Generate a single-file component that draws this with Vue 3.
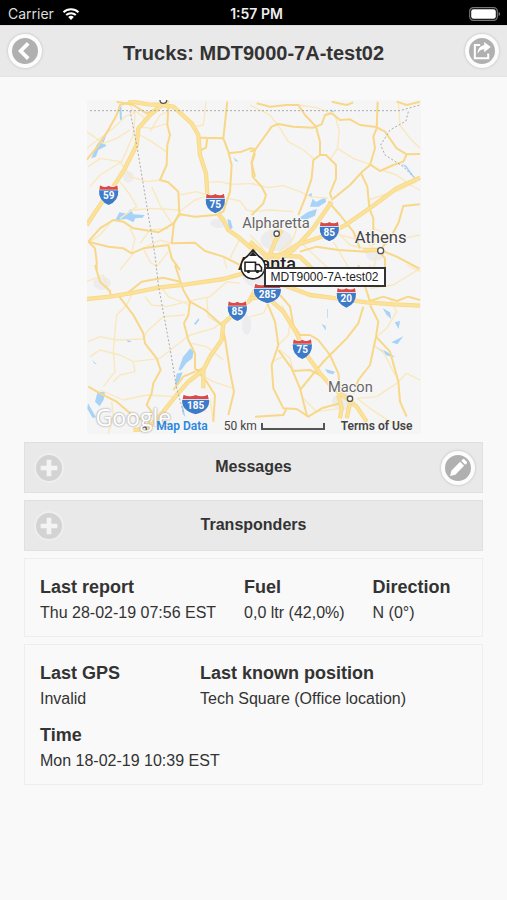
<script setup>
import { ref } from 'vue'

const sections = ref([
  { id: 'messages', title: 'Messages', editable: true, open: false },
  { id: 'transponders', title: 'Transponders', editable: false, open: false }
])

const cards = [
  {
    id: 'report',
    fields: [
      { label: 'Last report', value: 'Thu 28-02-19 07:56 EST' },
      { label: 'Fuel', value: '0,0 ltr (42,0%)' },
      { label: 'Direction', value: 'N (0°)' }
    ]
  },
  {
    id: 'gps',
    fields: [
      { label: 'Last GPS', value: 'Invalid' },
      { label: 'Last known position', value: 'Tech Square (Office location)' },
      { label: 'Time', value: 'Mon 18-02-19 10:39 EST' }
    ]
  }
]

const shields = [
  { n: '59', x: 86, y: 300 },
  { n: '75', x: 406, y: 325 },
  { n: '85', x: 748, y: 409 },
  { n: '85', x: 472, y: 648 },
  { n: '285', x: 562, y: 595, wide: true },
  { n: '20', x: 799, y: 608 },
  { n: '75', x: 667, y: 762 },
  { n: '185', x: 347, y: 928, wide: true }
]

// Road geometry, grouped by map tile; each tile spans 510 units.
const tiles = [
  {
    x: 0, y: 0,
    minor: [
      'M20 160L60 130L100 100L135 65L170 50L200 75L235 30',
      'M20 110L70 145L110 130L150 105',
      'M25 215L60 190L120 200L150 245L200 260L240 255',
      'M30 275L60 240L125 200L160 120L165 60L150 30',
      'M120 260L150 300L170 335L120 370',
      'M180 120L215 140L258 170',
      'M170 95L215 100L262 85L265 40',
      'M210 110L240 60L262 50',
      'M378 20L370 90L345 95',
      'M380 262L420 260L455 268L525 265',
      'M300 300L350 290L380 300',
      'M160 345L215 340L298 345',
      'M215 275L240 330L275 385',
      'M298 350L345 315L375 305',
      'M445 310L480 318L500 345L525 350',
      'M30 440L60 420L95 378',
      'M155 475L165 430L150 400',
      'M180 445L210 405L265 400',
      'M120 525L160 475',
      'M190 460L210 500L230 515L265 470',
      'M275 445L240 435L200 455',
      'M430 485L440 520M480 430L450 490'
    ],
    main: [
      'M20 195L60 145L85 105L110 60L120 30L150 22',
      'M265 35L262 90L270 120L262 150L260 210L240 255L265 262L295 290L298 355L282 385L275 445L345 443L375 468L430 485L480 510L525 512',
      'M300 358L345 365L405 360L430 350L450 290L455 210L445 170L430 130L442 20',
      'M360 128L430 130M382 130L378 158L358 168',
      'M445 175L485 170L510 160L525 162',
      'M525 175L515 205L525 245',
      'M25 440L60 400L100 375L130 380L160 400L235 412L280 385L300 358',
      'M25 440L85 455L130 460L155 475L190 460L265 450L275 490L300 525',
      'M25 440L45 460L50 500L50 525',
      'M110 20L160 30L200 55L230 40'
    ],
    highway: [
      'M20 390L60 330L100 275L135 220L170 150L175 100L210 60L245 30L280 35L335 85L355 120L360 180L378 235L382 295L405 345L430 375L445 405L480 430L525 470',
      'M145 18L205 28L245 30L265 16'
    ]
  },
  {
    x: 510, y: 0,
    minor: [
      'M0 30L60 60L90 100L115 140L160 165L195 195',
      'M0 265L55 278L100 272L150 290L180 305L235 310',
      'M145 30L200 38L255 60L268 110L262 160L240 195',
      'M262 160L310 190L360 208',
      'M0 350L60 345L130 350',
      'M445 20L450 90L480 130L510 160',
      'M355 315L400 300L450 285L500 260',
      'M395 225L440 240L480 270L510 285',
      'M370 400L420 420L460 430L510 420',
      'M20 380L60 400L70 450M150 370L130 430L80 480',
      'M250 400L300 450L340 460M270 420L350 440L380 470',
      'M380 480L370 525M150 440L240 525M250 440L300 525',
      'M0 420L30 450L60 490'
    ],
    main: [
      'M0 170L15 165L65 95L85 87L130 95L190 98L215 88L225 60L245 55L270 75L300 73L330 90L378 96L405 110L440 160L470 178L510 177',
      'M20 25L60 35L110 30L145 30L165 60L198 95L210 140L210 180L190 195L185 250L165 310L145 360',
      'M210 180L228 180L258 210L258 250L240 295L245 310',
      'M15 165L5 200L8 245L35 275L48 300L40 325L5 360',
      'M383 20L380 100L370 125L375 160L360 210L335 232L300 270L245 315',
      'M360 208L390 228L430 210L460 200L470 178',
      'M332 232L352 275L358 340L370 370L370 450',
      'M235 320L270 360L310 410L330 460',
      'M510 328L460 333L445 385L420 430L390 465',
      'M150 470L200 455L265 465L350 470L390 465L440 485L510 522',
      'M245 20L290 30L310 22M440 20L470 30L510 20',
      'M385 465L405 490L405 525'
    ],
    highway: [
      'M40 525L130 465L190 400L245 320',
      'M60 500L140 450L230 420L290 388L380 325L440 280L510 248',
      'M0 440L45 480L55 525M55 490L75 440L95 405',
      'M50 480L150 485L190 525M340 465L390 465'
    ]
  },
  {
    x: 0, y: 510,
    minor: [
      'M20 50L70 30L85 80M25 230L60 215L110 225L190 222',
      'M160 80L140 120L110 150L105 200L100 260L105 320L70 365',
      'M30 275L60 255L120 270L160 290L165 320L120 330L100 350',
      'M160 290L240 280L290 240L330 210L400 190L430 170',
      'M190 225L200 200L250 155L315 150',
      'M195 95L215 120L260 125L320 110L390 95L440 50L480 55',
      'M240 60L265 95L330 120',
      'M60 375L130 405L200 390L280 395L300 380',
      'M80 525L100 450L95 410',
      'M335 235L380 245L430 285',
      'M345 320L400 350L460 370',
      'M380 100L385 155L425 180',
      'M390 400L400 470M320 390L380 440'
    ],
    main: [
      'M45 0L60 50L90 78L92 98',
      'M118 95L160 150L190 205L195 235L230 280L242 315L220 355L215 385L200 420L215 440L200 500',
      'M135 90L185 50L250 38L300 50',
      'M285 0L300 45L310 75L330 110L325 150L312 175L325 225L345 265L345 310L380 350L405 390L400 470',
      'M330 110L375 135L425 180L435 220L450 320L462 380L445 450',
      'M25 365L60 385L110 410L145 440L185 465',
      'M345 320L310 335L280 375',
      'M380 300L360 315L345 315'
    ],
    highway: [
      'M20 102L90 95L150 85L235 68L320 58L430 42L480 28L525 10',
      'M525 75L510 105L470 140L430 175L425 225L390 275L370 315L325 350L290 390L250 440L200 495',
      'M370 315L370 370M160 495L215 490'
    ]
  },
  {
    x: 510, y: 510,
    minor: [
      'M0 155L40 145L55 115',
      'M85 240L115 210L120 170L95 120',
      'M130 320L120 280L90 255',
      'M320 400L360 430L420 470L480 490M320 400L380 395L440 355L470 325L510 345',
      'M375 220L410 190L440 140L420 100',
      'M65 290L100 275M370 240L400 260L435 330',
      'M360 70L430 60L510 10',
      'M270 430L200 440L160 400',
      'M340 60L360 0M470 0L510 20'
    ],
    main: [
      'M50 110L75 170L85 240L65 300L70 370L100 430L140 432L175 455L215 430L270 415',
      'M85 255L125 310L150 370L160 410L172 455',
      'M125 318L180 315L210 330',
      'M150 375L195 320L225 285L290 220L325 175L340 125',
      'M180 210L205 225L240 270L265 325L270 370',
      'M90 90L120 125L130 180L150 210L180 210',
      'M360 120L385 170L378 215L360 300L325 345L310 385',
      'M378 215L420 260L445 350L450 410L470 455',
      'M360 108L400 95L440 108L475 95L510 105',
      'M15 455L100 450L110 430M325 0L360 110'
    ],
    highway: [
      'M0 100L50 95L100 140L140 205L170 270L210 325L250 370L290 400L320 425L350 470',
      'M50 80L100 60L180 90L260 100L350 112L430 118L510 122',
      'M265 390L275 430L270 460M300 415L290 460'
    ]
  }
]
</script>

<template>
  <div class="app">
    <div class="status">
      <div class="carrier">
        <span>Carrier</span>
        <svg class="wifi" viewBox="0 0 18 14" aria-hidden="true">
          <path d="M1.5 5.2a10.8 10.8 0 0 1 15 0M4.2 8.1a7 7 0 0 1 9.6 0" fill="none" stroke="#fff" stroke-width="2" />
          <path d="M6.2 10.1a4 4 0 0 1 5.6 0L9 13z" fill="#fff" />
        </svg>
      </div>
      <div class="clock">1:57 PM</div>
      <svg class="battery" viewBox="0 0 32 14" aria-hidden="true">
        <rect x=".7" y=".7" width="27.6" height="12.6" rx="3.6" fill="none" stroke="#777" stroke-width="1.2" />
        <rect x="2.2" y="2.2" width="24.6" height="9.6" rx="2.2" fill="#fff" />
        <path d="M29.6 5v4q1.6-.6 1.6-2t-1.6-2z" fill="#777" />
      </svg>
    </div>

    <header class="header">
      <button class="round" type="button" aria-label="Back">
        <svg viewBox="0 0 28 28"><path d="M17.500 5.800L9.300 14l8.200 8.200" fill="none" stroke="#fff" stroke-width="4" /></svg>
      </button>
      <h1>Trucks: MDT9000-7A-test02</h1>
      <button class="round" type="button" aria-label="Share">
        <svg viewBox="0 0 28 28">
          <path d="M12 7.5H6.3v14.200h14.400v-5" fill="none" stroke="#fff" stroke-width="2.200" />
          <path d="M16.4 4.300l7 5.500-7 5.500v-3.300c-3.300 0-5.400 1.500-7.200 5 .3-5.600 3-8.800 7.200-9.100z" fill="#fff" />
        </svg>
      </button>
    </header>

    <main class="content">
      <div class="map">
        <svg class="roads" viewBox="21 15 1002 1002" role="img" aria-label="Map of the Atlanta area">
          <rect x="21" y="15" width="1002" height="1002" fill="#f5f5f5" />
          <g fill="#ececee">
            <ellipse cx="590" cy="435" rx="48" ry="32" />
            <ellipse cx="555" cy="535" rx="70" ry="48" />
            <ellipse cx="66" cy="565" rx="26" ry="20" />
            <ellipse cx="790" cy="920" rx="34" ry="26" />
            <ellipse cx="885" cy="478" rx="28" ry="20" />
            <ellipse cx="145" cy="245" rx="16" ry="18" />
            <ellipse cx="500" cy="690" rx="14" ry="30" />
            <ellipse cx="415" cy="385" rx="24" ry="14" />
          </g>
          <g fill="#a6d3f7">
            <path d="M34 190L50 150L84 106L70 145L80 152L55 165L48 185zM118 40l6-8 2 44-6-2z" />
            <path d="M106 376L118 352L140 356L152 342L160 358L194 360L188 368L166 370L160 382L140 372z" />
            <path d="M442 372l10 4 6 22-10 8zM460 186l16 14-10-2z" />
            <path d="M690 335l8-24 10 10 28-14 2 14-22 14zM655 370l30-20 26-8-6 20-28 12zM684 300l12-6-2 14z" />
            <path d="M965 206l14 6 26 36-10-6-16-22zM752 42l12 10-12-2z" />
            <path d="M285 868l5-32 18-4-14 36zM295 826l14-40 22-26 10 10-4 20-18 14-16 22zM304 930l6 8 6 28-8-10z" />
            <path d="M45 920l8-30 22 2-4 22-12 20zM24 925l24 42-10 2-16-28zM36 794l14 14-6-2zM138 732l18 8-12 2zM342 686l14-16 2 6-12 14z" />
            <path d="M725 687l12 6v14zM735 822l30 8-6 8-16-4zM742 642l2 0v26h-2z" />
            <path d="M908 640l22 12 4 20-14-12zM944 682l16-4-4 24zM934 742l36-18-18 24zM888 758l28 10 30 18-24-4z" />
          </g>
          <g v-for="(t, i) in tiles" :key="'a' + i" :transform="`translate(${t.x} ${t.y})`" fill="none" stroke-linejoin="round">
            <path v-for="d in t.minor" :key="d" :d="d" stroke="#fae8bd" stroke-width="4" />
            <path v-for="d in t.main" :key="d" :d="d" stroke="#f8d888" stroke-width="6" />
          </g>
          <g v-for="(t, i) in tiles" :key="'h' + i" :transform="`translate(${t.x} ${t.y})`" fill="none" stroke-linejoin="round">
            <path v-for="d in t.highway" :key="d" :d="d" stroke="#f8d985" stroke-width="13" />
            <path v-for="d in t.highway" :key="d + 'i'" :d="d" stroke="#fbe19a" stroke-width="8" />
          </g>
          <g fill="none" stroke="#aaa" stroke-width="3" stroke-dasharray="6 6">
            <path d="M30 47H960L1020 30M150 47L172 160L200 330L225 480L235 570L270 760L290 880L310 950" />
            <path d="M985 50L978 78L930 105L902 150L915 180L970 215L1005 250" />
          </g>
          <g v-for="(s, i) in shields" :key="'s' + i" :transform="`translate(${s.x} ${s.y})`">
            <g :transform="s.wide ? 'scale(1.4 1)' : undefined">
              <path d="M-28-32Q-14-22 0-30Q14-22 28-32Q34-8 27 6Q18 24 0 32Q-18 24-27 6Q-34-8-28-32z" fill="#fff" />
              <path d="M-26-29Q-13-20 0-28Q13-20 26-29L28-16H-28z" fill="#da4a49" />
              <path d="M-29-14H29Q31 18 0 30Q-31 18-29-14z" fill="#3d7bc9" />
            </g>
            <text class="shield" y="13">{{ s.n }}</text>
          </g>
          <g fill="#fff" stroke="#555" stroke-width="4">
            <path d="M240 15a10 10 0 1 0 20 0" />
            <circle cx="590" cy="416" r="8" />
            <circle cx="902" cy="467" r="9" />
            <circle cx="810" cy="911" r="8" />
            <circle cx="193" cy="1002" r="6" />
          </g>
          <g class="place">
            <text x="588" y="398">Alpharetta</text>
            <text class="strong" x="902" y="445">Athens</text>
            <text class="city" x="561" y="524">Atlanta</text>
            <text x="811" y="892">Macon</text>
          </g>
        </svg>
        <span class="google">Google</span>
        <div class="attribution">
          <a href="#map-data">Map Data</a>
          <span class="scale">50 km <i></i></span>
          <a class="terms" href="#terms">Terms of Use</a>
        </div>
        <svg class="marker" viewBox="0 0 32 34" aria-hidden="true">
          <path d="M16 2L22 8.500A12 12 0 1 1 10 8.500z" fill="#fff" stroke="#222" stroke-width="1.600" />
          <path d="M16 3.500l4 4.500h-8z" fill="#222" />
          <path d="M8 14.200h10.500v8.800H8zM18.500 16.500h3.500l2.500 3V23h-6z" fill="#fff" stroke="#222" stroke-width="1.600" />
          <circle cx="11.500" cy="23.600" r="1.700" fill="#222" />
          <circle cx="20.500" cy="23.600" r="1.700" fill="#222" />
        </svg>
        <span class="tip">MDT9000-7A-test02</span>
      </div>

      <section v-for="s in sections" :key="s.id" class="bar">
        <button class="toggle" type="button" :aria-expanded="s.open" @click="s.open = !s.open">
          <span class="plus">
            <svg viewBox="0 0 28 28"><path d="M14 5v18M5 14h18" stroke="#f4f4f4" stroke-width="5" /></svg>
          </span>
          <span class="name">{{ s.title }}</span>
        </button>
        <button v-if="s.editable" class="round edit" type="button" aria-label="Edit messages">
          <svg viewBox="0 0 28 28">
            <path d="M5.500 22.500l1.300-5.600L16.300 7.400l4.300 4.300-9.500 9.500zM17.500 6.200l1.700-1.700q.8-.7 1.600 0l2.700 2.700q.7.800 0 1.600l-1.700 1.700z" fill="#fff" />
          </svg>
        </button>
      </section>

      <section v-for="c in cards" :key="c.id" class="card">
        <dl :class="c.id">
          <div v-for="f in c.fields" :key="f.label" class="field">
            <dt>{{ f.label }}</dt>
            <dd>{{ f.value }}</dd>
          </div>
        </dl>
      </section>
    </main>
  </div>
</template>

<style>
body {
  background: #f9f9f9;
}
</style>

<style scoped>
.app {
  font-family: "Liberation Sans", Arial, sans-serif;
  font-size: 16px;
  color: #333;
}

.status {
  display: grid;
  grid-template-columns: 1fr auto 1fr;
  align-items: center;
  height: 25px;
  padding: 2px 6px 0 8px;
  box-sizing: border-box;
  background: #000;
  color: #eee;
  font-family: Inter, sans-serif;
  font-size: 14px;
}

.carrier {
  display: flex;
  align-items: center;
  gap: 8px;
  color: #ddd;
}

.wifi {
  width: 18px;
  height: 14px;
}

.clock {
  padding-left: 4px;
  font-weight: 600;
}

.battery {
  justify-self: end;
  width: 32px;
  height: 14px;
}

.header {
  display: flex;
  align-items: center;
  justify-content: space-between;
  height: 52px;
  padding: 0 8px;
  box-sizing: border-box;
  background: #e9e9e9;
  border-top: 1px solid #ddd;
  border-bottom: 1px solid #e4e4e4;
}

h1 {
  margin: 0;
  padding-top: 4px;
  font-size: 20px;
  line-height: 24px;
  text-align: center;
}

.round {
  display: block;
  flex: none;
  width: 34px;
  height: 34px;
  padding: 0;
  box-sizing: border-box;
  border: 4px solid #fcfcfc;
  border-radius: 50%;
  background: #b0b0b0;
  box-shadow: 0 0 3px rgba(0, 0, 0, 0.2);
}

.round svg,
.plus svg {
  display: block;
  width: 100%;
  height: 100%;
}

.content {
  display: flex;
  flex-direction: column;
  gap: 7px;
  padding: 23px 24px;
}

.map {
  position: relative;
  align-self: center;
  width: 334px;
  max-width: 100%;
  margin-bottom: 1px;
  overflow: hidden;
}

.roads {
  display: block;
  width: 100%;
}

.shield {
  font: 700 30px Roboto, sans-serif;
  fill: #fff;
  text-anchor: middle;
}

.place text {
  font-family: Roboto, sans-serif;
  font-size: 44px;
  fill: #666;
  stroke: #fafafa;
  stroke-width: 5px;
  paint-order: stroke;
  text-anchor: middle;
}

.place .strong {
  font-size: 50px;
  fill: #444;
}

.place .city {
  font-size: 54px;
  font-weight: 500;
  fill: #222;
}

.google {
  position: absolute;
  left: 9px;
  bottom: 4px;
  color: #fff;
  font: 500 23px/26px "Open Sans", sans-serif;
  text-shadow: 0 0 2px #aaa, 0 0 2px #aaa;
}

.attribution {
  position: absolute;
  right: 8px;
  bottom: 0;
  display: flex;
  align-items: center;
  gap: 16px;
  font: 400 12px/16px Roboto, sans-serif;
  color: #444;
}

.attribution a {
  color: #2a87df;
  font-weight: 600;
  text-decoration: none;
}

.attribution .terms {
  color: #444;
}

.scale {
  display: flex;
  align-items: center;
  gap: 4px;
}

.scale i {
  width: 60px;
  height: 5px;
  border: solid #555;
  border-width: 0 2px 2px;
}

.marker {
  position: absolute;
  left: 150px;
  top: 148px;
  width: 32px;
  height: 34px;
}

.tip {
  position: absolute;
  left: 177px;
  top: 167px;
  padding: 0 5px;
  border: 2px solid #333;
  background: #fff;
  color: #222;
  font-size: 12px;
  line-height: 16px;
}

.bar {
  position: relative;
}

.toggle {
  display: grid;
  grid-template-columns: 30px 1fr 30px;
  align-items: center;
  width: 100%;
  height: 51px;
  padding: 0 9px;
  border: 1px solid #e0e0e0;
  background: #e9e9e9;
  color: #333;
  font: 700 16px/20px "Liberation Sans", Arial, sans-serif;
}

.plus {
  width: 30px;
  height: 30px;
  box-sizing: border-box;
  border: 2px solid #eee;
  border-radius: 50%;
  background: #d3d3d3;
}

.name {
  padding-bottom: 2px;
}

.edit {
  position: absolute;
  top: 9px;
  right: 8px;
}

.card {
  padding: 16px 15px 11px;
  border: 1px solid #eee;
}

dl {
  display: flex;
  flex-wrap: wrap;
  gap: 12px 28px;
  margin: 0;
  line-height: 25px;
}

.gps .field {
  min-width: 132px;
}

dt {
  font-size: 18px;
  font-weight: 700;
}

dd {
  margin: 0;
}
</style>
